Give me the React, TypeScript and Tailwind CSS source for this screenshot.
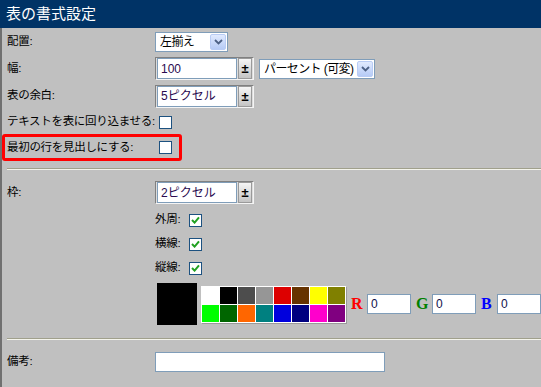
import React from "react"

const FONT = { fontFamily: '"Liberation Sans", "Noto Sans CJK JP", sans-serif' }

const PALETTE = [
  "#ffffff", "#000000", "#4d4d4d", "#969696", "#dd0000", "#663300", "#ffff00", "#808000",
  "#00ff00", "#006600", "#ff6600", "#008080", "#0000dd", "#000080", "#ff00cc", "#800080",
]

function Chevron() {
  return (
    <svg width="9" height="6" viewBox="0 0 9 6">
      <path d="M1 1 L4.5 4.5 L8 1" fill="none" stroke="#4d6185" strokeWidth="1.8" />
    </svg>
  )
}

function Select({ value, width }: { value: string; width: string }) {
  return (
    <div className={`${width} h-[20px] bg-white border border-[#7f9db9] flex items-center justify-between`}>
      <span className="pl-[4px] text-[12px] tracking-[-0.6px] text-black whitespace-nowrap">{value}</span>
      <div className="w-[16px] h-[16px] mr-[1px] rounded-[2px] border border-[#b9ccf5] bg-gradient-to-b from-[#e1eafe] to-[#b6cbf6] flex items-center justify-center">
        <Chevron />
      </div>
    </div>
  )
}

function SpinInput({ value }: { value: string }) {
  return (
    <div className="flex items-center gap-[1px] h-[23px] p-[1px] bg-[#dcdcdc] border border-t-[#808080] border-l-[#808080] border-b-[#f4f4f4] border-r-[#f4f4f4]">
      <div className="w-[80px] h-[21px] bg-white border border-[#7f9db9] flex items-center pl-[3px] text-[12px] text-[#2a0a50]">
        {value}
      </div>
      <div className="w-[14px] h-[21px] border border-[#9a9a9a] bg-gradient-to-b from-[#f6f6f6] to-[#c4c4c4] flex items-center justify-center text-[13px] font-bold leading-none text-black">
        ±
      </div>
    </div>
  )
}

function Checkbox({ checked }: { checked?: boolean }) {
  return (
    <div className="w-[13px] h-[13px] border border-[#1c5180] bg-white flex items-center justify-center">
      {checked && (
        <svg width="9" height="8" viewBox="0 0 9 8">
          <path d="M1 4 L3.6 6.6 L8 1.4" fill="none" stroke="#21a121" strokeWidth="2" />
        </svg>
      )}
    </div>
  )
}

function Row({ label, h, children, className = "" }: { label: string; h: string; children?: React.ReactNode; className?: string }) {
  return (
    <div className={`flex items-center ${h} ${className}`}>
      <div className="w-[153px] pl-[5px] text-[11.5px] text-black tracking-[-0.3px] whitespace-nowrap">{label}</div>
      <div className="flex items-center">{children}</div>
    </div>
  )
}

function Rule({ className = "" }: { className?: string }) {
  return (
    <div className={`ml-[5px] ${className}`}>
      <div className="h-[1px] bg-[#a0a08c]" />
      <div className="h-[1px] bg-[#f4f4ec]" />
    </div>
  )
}

function SubCheck({ label }: { label: string }) {
  return (
    <div className="flex items-center h-[24px]">
      <span className="w-[34px] text-[11.5px] text-black tracking-[-0.3px]">{label}</span>
      <Checkbox checked />
    </div>
  )
}

function RgbInput({ letter, color }: { letter: string; color: string }) {
  return (
    <div className="flex items-center">
      <span className={`w-[16px] text-[16px] font-bold ${color}`} style={{ fontFamily: '"Liberation Serif", serif' }}>
        {letter}
      </span>
      <div className="w-[44px] h-[20px] bg-white border border-[#7f9db9] flex items-center pl-[3px] text-[12px] text-[#10104a]">
        0
      </div>
    </div>
  )
}

export default function App() {
  return (
    <div className="w-[541px] h-[387px] bg-[#c0c0c0] overflow-hidden flex flex-col" style={FONT}>
      <header className="h-[28px] shrink-0 bg-[#003366] text-white text-[15px] pl-[6px] flex items-center">
        表の書式設定
      </header>

      <div className="flex-1 border-l-2 border-[#707070] flex flex-col">
        <Row label="配置:" h="h-[27px]">
          <Select value="左揃え" width="w-[73px]" />
        </Row>
        <Row label="幅:" h="h-[27px]">
          <SpinInput value="100" />
          <div className="ml-[5px]">
            <Select value="パーセント (可変)" width="w-[116px]" />
          </div>
        </Row>
        <Row label="表の余白:" h="h-[28px]">
          <SpinInput value="5ピクセル" />
        </Row>
        <Row label="テキストを表に回り込ませる:" h="h-[24px]">
          <div className="ml-[4px]">
            <Checkbox />
          </div>
        </Row>

        {/* highlighted row */}
        <div className="w-[180px] h-[27px] border-[3px] border-[#ff0000] rounded-[3px] flex items-center">
          <div className="w-[150px] pl-[2px] text-[11.5px] text-black tracking-[-0.3px] whitespace-nowrap">最初の行を見出しにする:</div>
          <div className="ml-[4px]">
            <Checkbox />
          </div>
        </div>

        <Rule className="mt-[7px]" />

        <Row label="枠:" h="h-[23px]" className="mt-[11px]">
          <SpinInput value="2ピクセル" />
        </Row>

        <div className="ml-[153px] mt-[4px] flex flex-col">
          <SubCheck label="外周:" />
          <SubCheck label="横線:" />
          <SubCheck label="縦線:" />

          <div className="flex items-center mt-[3px] ml-[2px]">
            <div className="w-[42px] h-[42px] bg-black" />
            <div className="ml-[4px] grid grid-cols-[repeat(8,17px)] gap-[1px] p-[1px] bg-white shadow-[1px_1px_0_#999]">
              {PALETTE.map((c) => (
                <div key={c} className="w-[17px] h-[17px]" style={{ background: c }} />
              ))}
            </div>
            <div className="ml-[5px] flex items-center gap-[5px]">
              <RgbInput letter="R" color="text-[#ff0000]" />
              <RgbInput letter="G" color="text-[#008000]" />
              <RgbInput letter="B" color="text-[#0000ff]" />
            </div>
          </div>
        </div>

        <Rule className="mt-[13px]" />

        <Row label="備考:" h="h-[20px]" className="mt-[12px]">
          <div className="w-[230px] h-[20px] bg-white border border-[#7f9db9]" />
        </Row>
      </div>
    </div>
  )
}
